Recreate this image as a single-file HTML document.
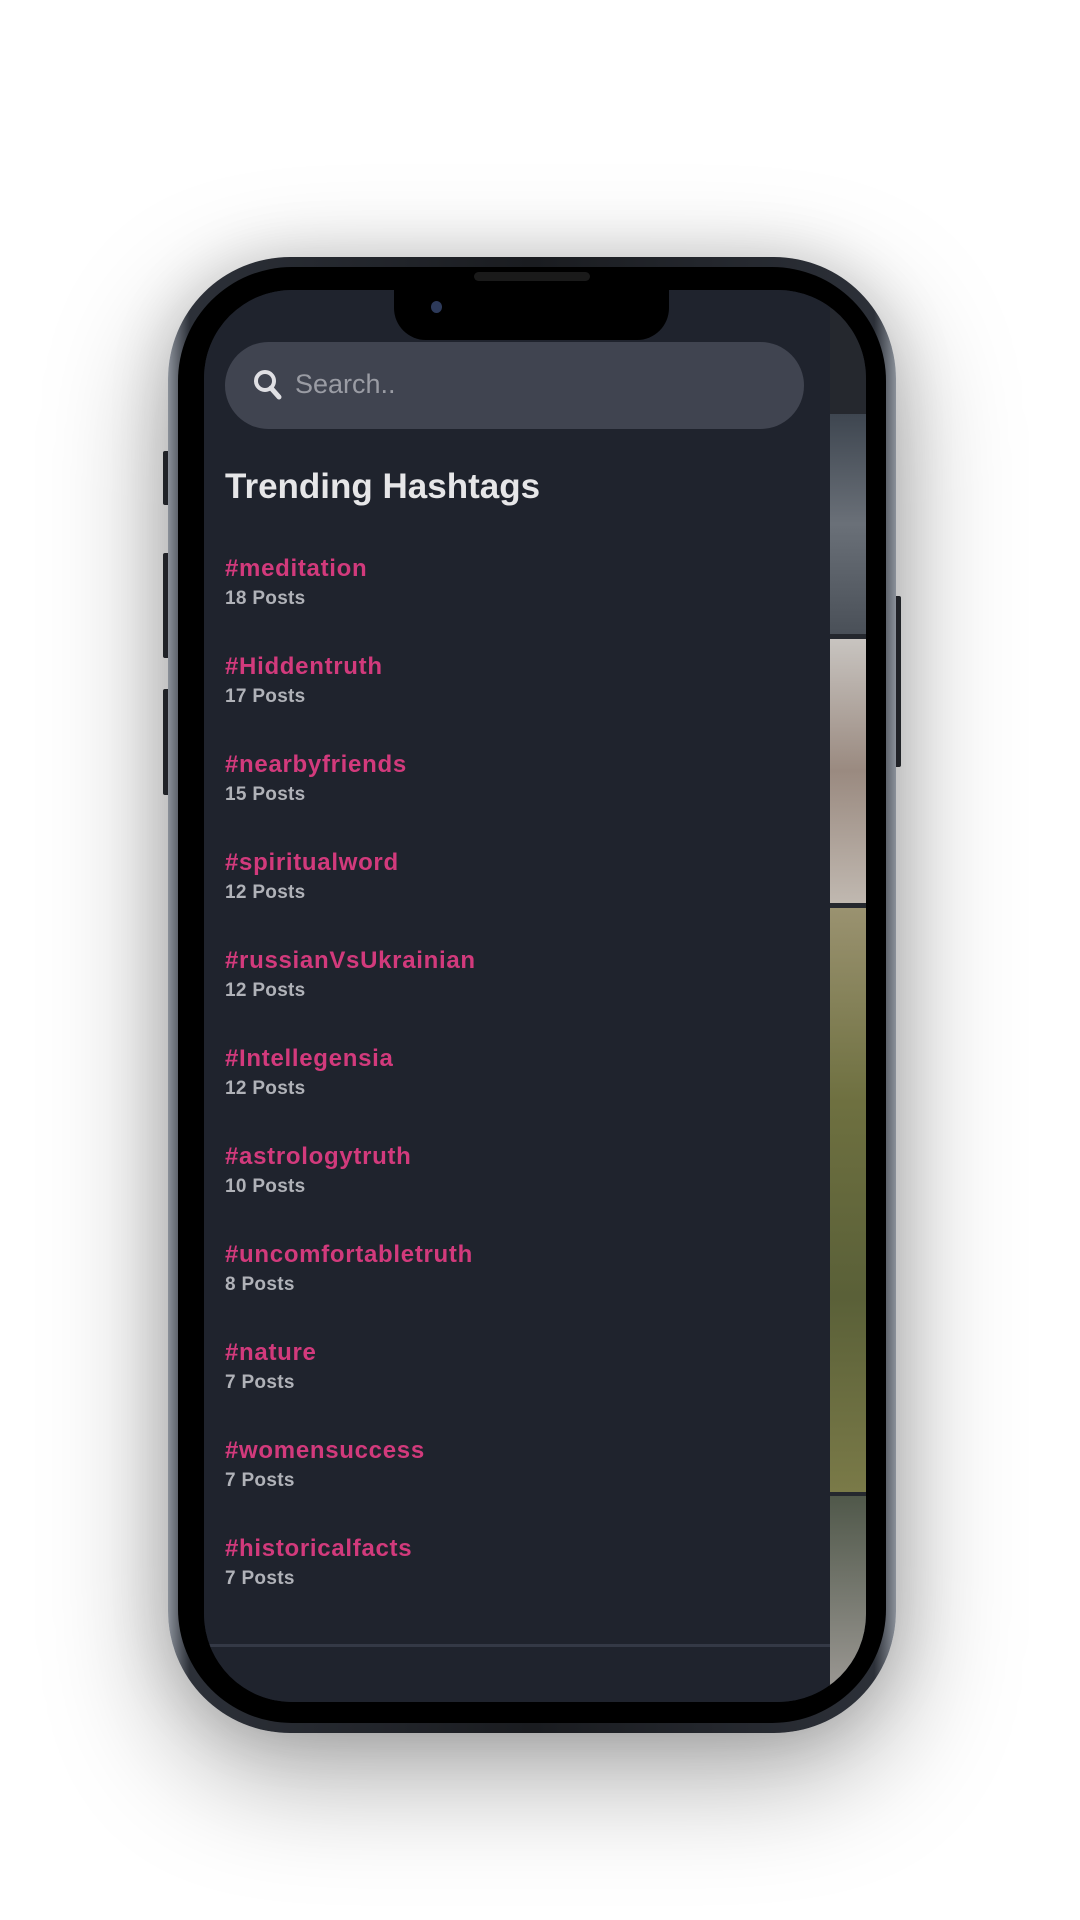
<!DOCTYPE html>
<html><head><meta charset="utf-8"><style>
*{margin:0;padding:0;box-sizing:border-box}
body{width:1080px;height:1920px;background:#fff;position:relative;overflow:hidden;font-family:"Liberation Sans",sans-serif}
.phone{position:absolute;left:168px;top:257px;width:728px;height:1476px;border-radius:122px;background:linear-gradient(90deg,#8a9099,#2c3038 3%,#1a1c20 50%,#2c3038 97%,#8a9099);box-shadow:0 40px 120px rgba(0,0,0,.35),0 0 60px rgba(0,0,0,.15)}
.bezel{position:absolute;left:10px;top:10px;right:10px;bottom:10px;border-radius:114px;background:#000}
.screen{position:absolute;left:204px;top:290px;width:662px;height:1412px;border-radius:88px;overflow:hidden;background:#1f232d}
.strip{position:absolute;left:625px;top:0;width:40px;height:100%;background:#25282e}
.s1{position:absolute;left:0;width:100%}
.drawer{position:absolute;left:0;top:0;width:626px;height:100%;background:#1f232d}
.notch{position:absolute;left:394px;top:284px;width:275px;height:56px;background:#000;border-radius:0 0 32px 32px}
.speaker{position:absolute;left:474px;top:272px;width:116px;height:9px;border-radius:5px;background:#1a1a1a}
.cam{position:absolute;left:431px;top:301px;width:11px;height:12px;border-radius:50%;background:#2d3a5a}
.search{position:absolute;left:21px;top:52px;width:579px;height:87px;border-radius:44px;background:#404450}
.search span{position:absolute;left:70px;top:27px;font-size:27px;color:#9a9ca4}
h1{position:absolute;left:21px;top:177px;font-size:35px;color:#e6e6e8;font-weight:bold}
.tag{position:absolute;left:21px;font-size:24px;font-weight:bold;color:#d23a7c;letter-spacing:.7px}
.cnt{position:absolute;left:21px;font-size:19px;font-weight:bold;color:#b0b2b8;letter-spacing:.3px}
.div{position:absolute;left:0;top:1354px;width:626px;height:3px;background:#343946}
.btn{position:absolute;background:#2a2d33;border-radius:2px}
</style></head><body>
<div class="btn" style="left:163px;top:451px;width:8px;height:54px"></div>
<div class="btn" style="left:163px;top:553px;width:8px;height:105px"></div>
<div class="btn" style="left:163px;top:689px;width:8px;height:106px"></div>
<div class="btn" style="left:893px;top:596px;width:8px;height:171px"></div>
<div class="phone"><div class="bezel"></div></div>
<div class="screen">
 <div class="strip">
  <div class="s1" style="top:124px;height:220px;background:linear-gradient(#3e4650,#6a7078,#4a5058)"></div>
  <div class="s1" style="top:349px;height:264px;background:linear-gradient(#c8c4c0,#9a8a80,#c0b8b0)"></div>
  <div class="s1" style="top:618px;height:584px;background:linear-gradient(#9a9270,#6e7040,#5a6038,#7a7a48)"></div>
  <div class="s1" style="top:1206px;height:206px;background:linear-gradient(#50584a,#a09c98)"></div>
 </div>
 <div class="drawer">
  <div class="search">
   <svg style="position:absolute;left:28px;top:27px" width="30" height="32" viewBox="0 0 30 32"><circle cx="12" cy="12" r="9" fill="none" stroke="#e0e0e4" stroke-width="4"/><path d="M18 19l8 9" stroke="#e0e0e4" stroke-width="5" stroke-linecap="round"/></svg>
   <span>Search..</span>
  </div>
  <h1>Trending Hashtags</h1>
  <div class="tag" style="top:265px">#meditation</div><div class="cnt" style="top:298px">18 Posts</div>
  <div class="tag" style="top:363px">#Hiddentruth</div><div class="cnt" style="top:396px">17 Posts</div>
  <div class="tag" style="top:461px">#nearbyfriends</div><div class="cnt" style="top:494px">15 Posts</div>
  <div class="tag" style="top:559px">#spiritualword</div><div class="cnt" style="top:592px">12 Posts</div>
  <div class="tag" style="top:657px">#russianVsUkrainian</div><div class="cnt" style="top:690px">12 Posts</div>
  <div class="tag" style="top:755px">#Intellegensia</div><div class="cnt" style="top:788px">12 Posts</div>
  <div class="tag" style="top:853px">#astrologytruth</div><div class="cnt" style="top:886px">10 Posts</div>
  <div class="tag" style="top:951px">#uncomfortabletruth</div><div class="cnt" style="top:984px">8 Posts</div>
  <div class="tag" style="top:1049px">#nature</div><div class="cnt" style="top:1082px">7 Posts</div>
  <div class="tag" style="top:1147px">#womensuccess</div><div class="cnt" style="top:1180px">7 Posts</div>
  <div class="tag" style="top:1245px">#historicalfacts</div><div class="cnt" style="top:1278px">7 Posts</div>
  <div class="div"></div>
 </div>
</div>
<div class="notch"></div>
<div class="speaker"></div>
<div class="cam"></div>
</body></html>
